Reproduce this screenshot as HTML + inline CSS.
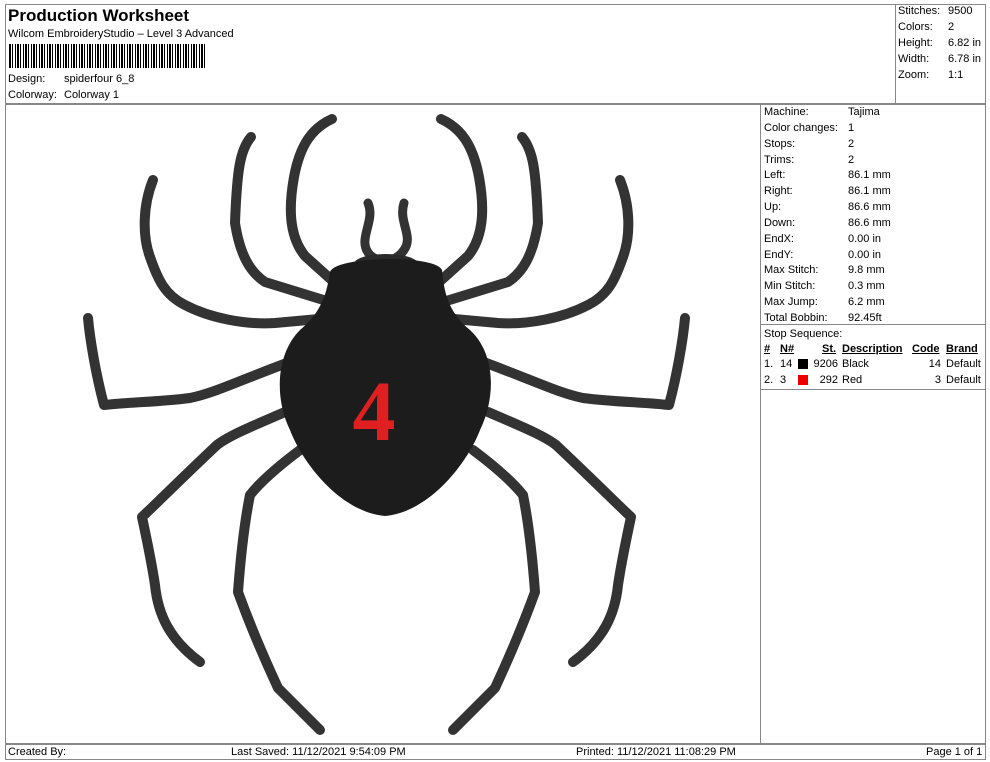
<!DOCTYPE html>
<html><head><meta charset="utf-8"><style>
*{margin:0;padding:0;box-sizing:border-box}
body{width:990px;height:762px;background:#fff;font-family:"Liberation Sans",sans-serif;font-size:11px;color:#000;position:relative;overflow:hidden}
.a{position:absolute;white-space:nowrap}
.l{position:absolute;background:#888}
</style></head><body>
<div class="l" style="left:5px;top:4px;width:981px;height:1px"></div>
<div class="l" style="left:5px;top:4px;width:1px;height:756px"></div>
<div class="l" style="left:985px;top:4px;width:1px;height:756px"></div>
<div class="l" style="left:5px;top:759px;width:981px;height:1px"></div>
<div class="l" style="left:5px;top:103px;width:981px;height:2px"></div>
<div class="l" style="left:895px;top:4px;width:1px;height:100px"></div>
<div class="l" style="left:760px;top:104px;width:1px;height:640px"></div>
<div class="l" style="left:760px;top:324px;width:226px;height:1px"></div>
<div class="l" style="left:760px;top:389px;width:226px;height:1px"></div>
<div class="l" style="left:5px;top:743px;width:981px;height:2px"></div>

<div class="a" style="left:8px;top:6px;font-size:17px;font-weight:bold">Production Worksheet</div>
<div class="a" style="left:8px;top:28px">Wilcom EmbroideryStudio – Level 3 Advanced</div>
<div class="a" style="left:9px;top:44px;width:196px;height:24px;background:repeating-linear-gradient(90deg,#000 0 2px,#fff 2px 3px,#000 3px 4px,#fff 4px 6px,#000 6px 7px,#fff 7px 8px)"></div>
<div class="a" style="left:8px;top:73px">Design:</div><div class="a" style="left:64px;top:73px">spiderfour 6_8</div>
<div class="a" style="left:8px;top:89px">Colorway:</div><div class="a" style="left:64px;top:89px">Colorway 1</div>

<div class="a" style="left:898px;top:5px">Stitches:</div><div class="a" style="left:948px;top:5px">9500</div>
<div class="a" style="left:898px;top:21px">Colors:</div><div class="a" style="left:948px;top:21px">2</div>
<div class="a" style="left:898px;top:37px">Height:</div><div class="a" style="left:948px;top:37px">6.82 in</div>
<div class="a" style="left:898px;top:53px">Width:</div><div class="a" style="left:948px;top:53px">6.78 in</div>
<div class="a" style="left:898px;top:69px">Zoom:</div><div class="a" style="left:948px;top:69px">1:1</div>

<div style="position:absolute;left:764px;top:105px;line-height:15.85px">
Machine:<br>Color changes:<br>Stops:<br>Trims:<br>Left:<br>Right:<br>Up:<br>Down:<br>EndX:<br>EndY:<br>Max Stitch:<br>Min Stitch:<br>Max Jump:<br>Total Bobbin:<br>Stop Sequence:</div>
<div style="position:absolute;left:848px;top:105px;line-height:15.85px">
Tajima<br>1<br>2<br>2<br>86.1 mm<br>86.1 mm<br>86.6 mm<br>86.6 mm<br>0.00 in<br>0.00 in<br>9.8 mm<br>0.3 mm<br>6.2 mm<br>92.45ft</div>

<div class="a" style="left:764px;top:343px;font-weight:bold;text-decoration:underline">#</div>
<div class="a" style="left:780px;top:343px;font-weight:bold;text-decoration:underline">N#</div>
<div class="a" style="left:822px;top:343px;font-weight:bold;text-decoration:underline">St.</div>
<div class="a" style="left:842px;top:343px;font-weight:bold;text-decoration:underline">Description</div>
<div class="a" style="left:912px;top:343px;font-weight:bold;text-decoration:underline">Code</div>
<div class="a" style="left:946px;top:343px;font-weight:bold;text-decoration:underline">Brand</div>
<div class="a" style="left:764px;top:358px">1.</div><div class="a" style="left:780px;top:358px">14</div>
<div class="a" style="left:798px;top:359px;width:10px;height:10px;background:#000"></div>
<div class="a" style="left:811px;top:358px;width:27px;text-align:right">9206</div>
<div class="a" style="left:842px;top:358px">Black</div>
<div class="a" style="left:920px;top:358px;width:21px;text-align:right">14</div>
<div class="a" style="left:946px;top:358px">Default</div>
<div class="a" style="left:764px;top:374px">2.</div><div class="a" style="left:780px;top:374px">3</div>
<div class="a" style="left:798px;top:375px;width:10px;height:10px;background:#e00"></div>
<div class="a" style="left:811px;top:374px;width:27px;text-align:right">292</div>
<div class="a" style="left:842px;top:374px">Red</div>
<div class="a" style="left:920px;top:374px;width:21px;text-align:right">3</div>
<div class="a" style="left:946px;top:374px">Default</div>

<div class="a" style="left:8px;top:746px">Created By:</div>
<div class="a" style="left:231px;top:746px">Last Saved: 11/12/2021 9:54:09 PM</div>
<div class="a" style="left:576px;top:746px">Printed: 11/12/2021 11:08:29 PM</div>
<div class="a" style="left:926px;top:746px">Page 1 of 1</div>

<svg class="a" style="left:0;top:0" width="990" height="762">
<defs><g id="legs" fill="none" stroke="#333" stroke-linecap="round" stroke-linejoin="round">
<path stroke-width="10" d="M332,119 C312,128 300,145 294,177 C289,205 288,235 305,256 L335,283"/>
<path stroke-width="10" d="M251,137 C240,150 237,170 235,223 C240,255 250,272 265,282 L330,302"/>
<path stroke-width="10" d="M153,180 C143,205 142,235 150,257 C158,280 165,295 185,305 C210,318 245,325 275,323 L330,318"/>
<path stroke-width="10" d="M88,318 C90,340 96,375 104,405 C130,402 160,402 190,398 C215,393 240,380 295,360"/>
<path stroke-width="10" d="M285,412 C255,425 230,435 217,445 C185,475 160,500 142,517 C148,545 152,565 155,585 C158,615 170,640 200,662"/>
<path stroke-width="10" d="M300,450 C280,465 262,480 250,495 C243,530 240,565 238,592 C250,625 265,660 278,688 L320,730"/>
</g></defs>
<use href="#legs"/>
<use href="#legs" transform="translate(773,0) scale(-1,1)"/>
<path fill="none" stroke="#333" stroke-width="9" stroke-linecap="round" d="M368,203 C376,222 356,240 370,255 C380,264 396,262 404,250 C414,236 398,222 404,203"/>
<ellipse cx="386" cy="264" rx="32" ry="10" fill="#2a2a2a"/>
<path fill="#1c1c1c" d="M330,272 C335,256 435,254 442,270 C444,292 448,312 470,330 C497,355 495,400 480,430 C468,462 430,512 385,516 C340,512 302,462 290,430 C275,400 275,355 300,330 C322,312 327,292 330,272 Z"/>
<text x="374" y="440" font-family="Liberation Serif,serif" font-size="86" font-weight="bold" fill="#e02020" text-anchor="middle">4</text>
</svg>
</body></html>
